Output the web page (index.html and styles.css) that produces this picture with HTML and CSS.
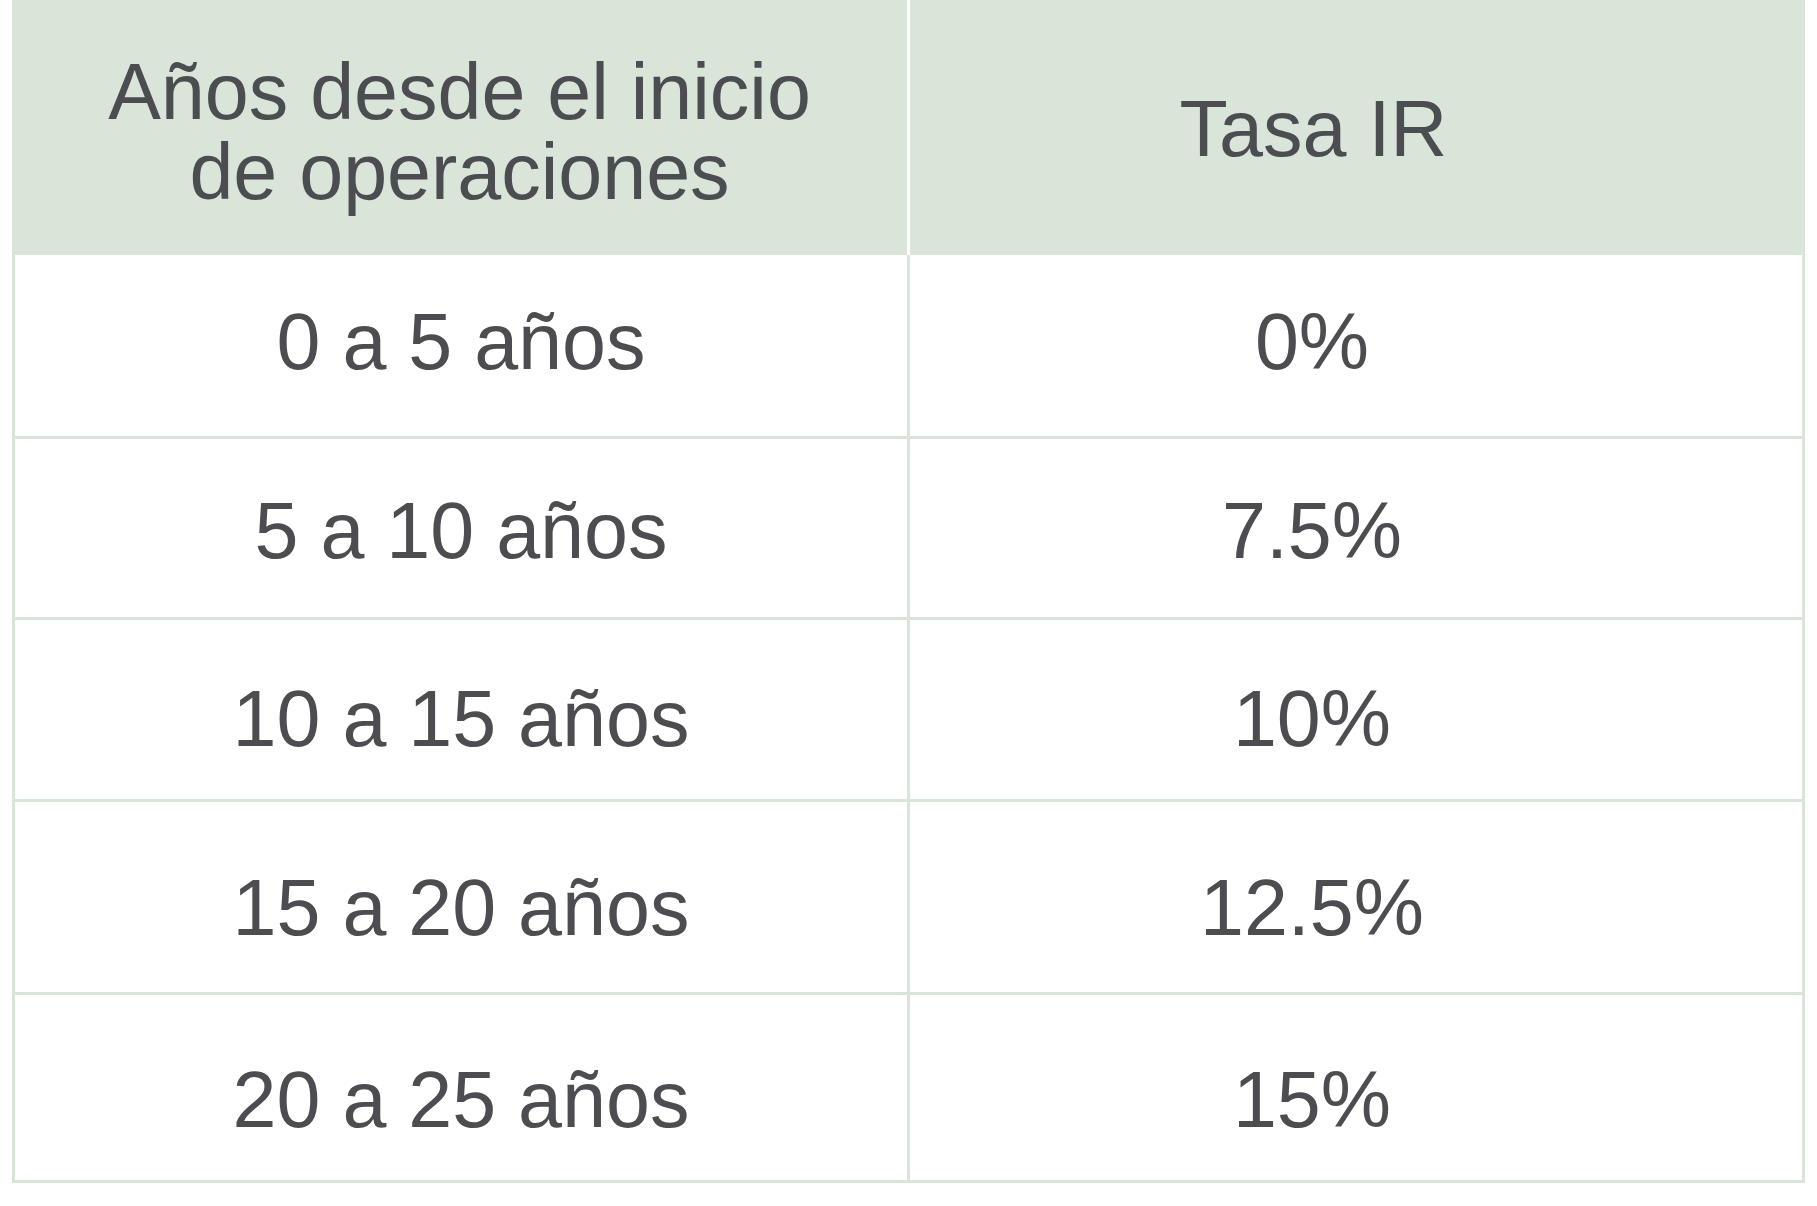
FILE: index.html
```html
<!DOCTYPE html>
<html lang="es">
<head>
<meta charset="utf-8">
<title>Tasa IR</title>
<link rel="stylesheet" href="styles.css">
</head>
<body>
<div class="tabla">
  <div class="cabecera">
    <div class="celda-cab izq"><span class="linea">Años desde el inicio</span><span class="linea">de operaciones</span></div>
    <div class="celda-cab der">Tasa IR</div>
  </div>
  <div class="cuerpo">
    <div class="fila"><div class="celda izq">0 a 5 años</div><div class="celda der">0%</div></div>
    <div class="fila"><div class="celda izq">5 a 10 años</div><div class="celda der">7.5%</div></div>
    <div class="fila"><div class="celda izq">10 a 15 años</div><div class="celda der">10%</div></div>
    <div class="fila"><div class="celda izq">15 a 20 años</div><div class="celda der">12.5%</div></div>
    <div class="fila"><div class="celda izq">20 a 25 años</div><div class="celda der">15%</div></div>
  </div>
</div>
</body>
</html>
```

FILE: styles.css
```css
html, body {
  margin: 0;
  padding: 0;
  background: #ffffff;
}

body {
  font-family: "Liberation Sans", Arial, sans-serif;
  color: #4b4d50;
}

.tabla {
  margin-left: 12px;
  width: 1793px;
}

.cabecera {
  display: grid;
  grid-template-columns: 895px 895px;
  column-gap: 3px;
  height: 255px;
}

.celda-cab {
  background: #d9e5d9;
  font-size: 79px;
  line-height: 80px;
  text-align: center;
  box-sizing: border-box;
}

.celda-cab .linea {
  display: block;
  height: 80px;
}

.celda-cab.izq {
  padding-top: 52px;
}

.celda-cab.der {
  padding-top: 89px;
  padding-right: 88px;
}

.cuerpo {
  border: 3px solid #d9e5d9;
  border-top: none;
}

.fila {
  display: grid;
  grid-template-columns: 892px 892px;
  column-gap: 3px;
  background: #d9e5d9;
  border-top: 3px solid #d9e5d9;
}

.fila:first-child {
  border-top: none;
}

.celda {
  background: #ffffff;
  font-size: 79px;
  line-height: 80px;
  text-align: center;
  box-sizing: border-box;
}

.celda.der {
  padding-right: 88px;
}

.fila:nth-child(1) { height: 181px; }
.fila:nth-child(2) { height: 178px; }
.fila:nth-child(3) { height: 179px; }
.fila:nth-child(4) { height: 190px; }
.fila:nth-child(5) { height: 185px; }

.fila:nth-child(1) .celda { padding-top: 47px; }
.fila:nth-child(2) .celda { padding-top: 52px; }
.fila:nth-child(3) .celda { padding-top: 59px; }
.fila:nth-child(4) .celda { padding-top: 66px; }
.fila:nth-child(5) .celda { padding-top: 65px; }
```
